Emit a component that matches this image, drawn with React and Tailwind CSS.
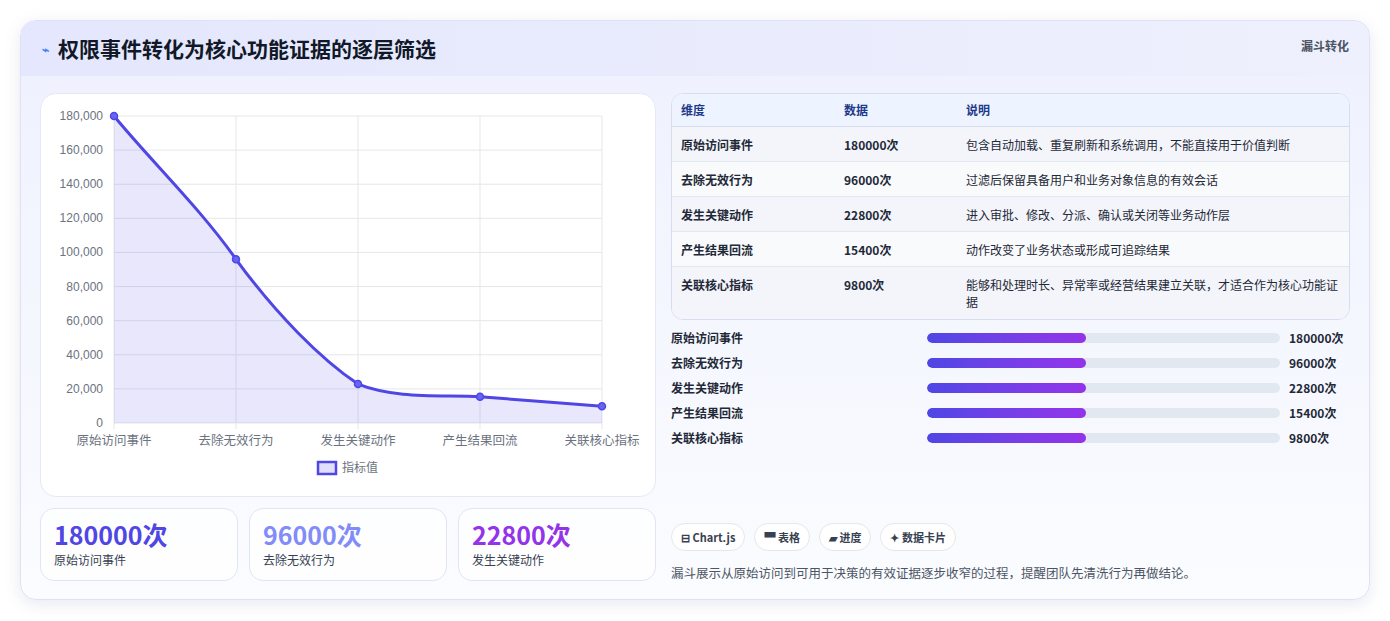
const F = { fontFamily: '"Noto Sans CJK SC","Noto Sans",sans-serif' };
const rows = [
  ["原始访问事件", "180000次", "包含自动加载、重复刷新和系统调用，不能直接用于价值判断"],
  ["去除无效行为", "96000次", "过滤后保留具备用户和业务对象信息的有效会话"],
  ["发生关键动作", "22800次", "进入审批、修改、分派、确认或关闭等业务动作层"],
  ["产生结果回流", "15400次", "动作改变了业务状态或形成可追踪结果"],
  ["关联核心指标", "9800次", "能够和处理时长、异常率或经营结果建立关联，才适合作为核心功能证据"],
];
const xs = [113, 235, 357, 479, 601];
const vals = [180000, 96000, 22800, 15400, 9800];
const ys = vals.map(v => 422 - (v / 180000) * 307);
function Chart() {
  const line = `M113,${ys[0]} C150,${ys[0] + 45} 200,${ys[1] - 50} 235,${ys[1]} C275,${ys[1] + 55} 320,${ys[2] - 25} 357,${ys[2]} C395,${ys[2] + 15} 440,${ys[3] - 2} 479,${ys[3]} C520,${ys[3] + 3} 560,${ys[4] - 3} 601,${ys[4]}`;
  const ticks = [0, 20000, 40000, 60000, 80000, 100000, 120000, 140000, 160000, 180000];
  const labels = ["原始访问事件", "去除无效行为", "发生关键动作", "产生结果回流", "关联核心指标"];
  return (
    <svg viewBox="40 93 615 403" width="615" height="403" className="block" style={{ fontFamily: '"Liberation Sans","Noto Sans CJK SC",sans-serif' }}>
      {ticks.map(t => { const y = 422 - t / 180000 * 307; return <g key={t}><line x1="113" x2="601" y1={y} y2={y} stroke="#e5e7eb" /><text x="102" y={y + 4} textAnchor="end" fontSize="12" fill="#6b7280">{t.toLocaleString("en-US")}</text></g>; })}
      {xs.map(x => <line key={x} x1={x} x2={x} y1="115" y2="428" stroke="#e5e7eb" />)}
      <path d={line + " L601,422 L113,422 Z"} fill="rgba(99,91,230,0.15)" />
      <path d={line} fill="none" stroke="#4f46e5" strokeWidth="3" />
      {xs.map((x, i) => <circle key={x} cx={x} cy={ys[i]} r="3.5" fill="#6366f1" stroke="#4f46e5" strokeWidth="1.5" />)}
      {labels.map((l, i) => <text key={l} x={xs[i]} y="444" textAnchor="middle" fontSize="12.5" fill="#6b7280" style={F}>{l}</text>)}
      <rect x="317" y="461" width="18" height="12" fill="rgba(99,91,230,0.2)" stroke="#4f46e5" strokeWidth="2.5" />
      <text x="341" y="471" fontSize="12" fill="#6b7280" style={F}>指标值</text>
    </svg>
  );
}
export default function App() {
  return (
    <div className="w-[1390px] h-[621px] bg-white pt-[20px] px-[20px]" style={F}>
      <div className="w-[1350px] h-[580px] rounded-[16px] border border-[#dde3f5] shadow-[0_4px_16px_rgba(100,110,160,0.15)] bg-gradient-to-b from-[#eef1fe] to-[#fbfcff] overflow-hidden">
        <div className="h-[55px] flex items-center justify-between px-[20px] bg-gradient-to-r from-[#e4e7fd] to-[#eef0fd]">
          <div className="flex items-center gap-[9px] text-[21px] font-bold text-[#111827]"><span className="text-[#3b82f6] text-[12px] ml-[1px]">⌁</span>权限事件转化为核心功能证据的逐层筛选</div>
          <div className="self-start mt-[16px] text-[12px] font-bold text-[#4b5563]">漏斗转化</div>
        </div>
        <div className="flex gap-[15px] px-[19px] pt-[17px]">
          <div className="w-[616px] flex flex-col gap-[11px]">
            <div className="h-[404px] rounded-[16px] bg-white border border-[#e5e9f5] overflow-hidden"><Chart /></div>
            <div className="flex gap-[11px]">
              {[["180000次", "原始访问事件", "text-[#4f46e5]"], ["96000次", "去除无效行为", "text-[#818cf8]"], ["22800次", "发生关键动作", "text-[#9333ea]"]].map(([v, l, c]) => (
                <div key={l} className="flex-1 h-[73px] rounded-[14px] border border-[#dfe5f5] bg-white/70 px-[13px] pt-[8px]">
                  <div className={`text-[25px] font-bold leading-[34px] ${c}`}>{v}</div>
                  <div className="text-[12px] text-[#374151]">{l}</div>
                </div>
              ))}
            </div>
          </div>
          <div className="flex-1 flex flex-col">
            <div className="rounded-[12px] border border-[#d7ddef] overflow-hidden bg-white text-[12px]">
              <div className="flex h-[33px] items-center bg-[#eef4ff] text-[#1e3a8a] font-bold border-b border-[#d7ddef]">
                <div className="w-[172px] pl-[9px]">维度</div><div className="w-[122px]">数据</div><div>说明</div>
              </div>
              {rows.map((r, i) => (
                <div key={i} className={`flex py-[9px] text-[#1f2937] ${i % 2 ? "bg-[#f8fafc]" : "bg-[#f3f5fb]"} ${i < 4 ? "border-b border-[#e2e8f0] h-[35px]" : ""}`}>
                  <div className="w-[172px] pl-[9px] font-bold">{r[0]}</div><div className="w-[122px] font-bold">{r[1]}</div><div className="flex-1 pr-[10px] leading-[17px]">{r[2]}</div>
                </div>
              ))}
            </div>
            <div className="flex flex-col gap-[9px] mt-[10px]">
              {rows.map(r => (
                <div key={r[0]} className="flex items-center h-[16px] text-[12px] font-bold text-[#1f2937]">
                  <div className="w-[256px]">{r[0]}</div>
                  <div className="w-[353px] h-[10px] rounded-full bg-[#e2e8f0] overflow-hidden"><div className="w-[159px] h-full rounded-full bg-gradient-to-r from-[#4f46e5] to-[#9333ea]" /></div>
                  <div className="ml-[9px]">{r[1]}</div>
                </div>
              ))}
            </div>
            <div className="flex gap-[9px] mt-[77px] text-[11px] font-bold text-[#374151]">
              {["⊟ Chart.js", "▀ 表格", "▰ 进度", "✦ 数据卡片"].map(c => <div key={c} className="h-[28px] px-[9px] flex items-center rounded-full border border-[#e5e7eb] bg-white">{c}</div>)}
            </div>
            <div className="mt-[13px] text-[12.5px] text-[#4b5563]">漏斗展示从原始访问到可用于决策的有效证据逐步收窄的过程，提醒团队先清洗行为再做结论。</div>
          </div>
        </div>
      </div>
    </div>
  );
}
